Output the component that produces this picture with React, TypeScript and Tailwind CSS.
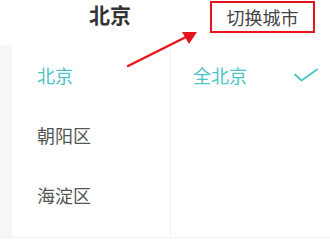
import React from "react";

const districts = ["北京", "朝阳区", "海淀区"];

export default function App() {
  return (
    <div
      className="relative w-[330px] h-[241px] overflow-hidden bg-white"
      style={{ fontFamily: '"Noto Sans CJK SC", "Noto Sans", sans-serif' }}
    >
      {/* Header */}
      <div className="flex h-[45px] items-start">
        <div className="ml-[89px] mt-[1px] text-[21px] font-bold leading-[26px] text-[#333]">北京</div>
        <div className="ml-auto mr-[15px] mt-[1px] flex h-[32px] w-[105px] items-center justify-center border-2 border-[#e8131b] text-[18px] text-[#444]">
          切换城市
        </div>
      </div>

      {/* Body */}
      <div className="flex h-[193px] border-b border-[#f2f2f2]">
        <div className="w-[12px] bg-[#f6f6f6]" />
        <div className="w-[159px] border-r border-[#f3f3f3]">
          {districts.map((d, i) => (
            <div
              key={d}
              className={`flex h-[60px] items-center pl-[25px] text-[18px] ${
                i === 0 ? "text-[#4cc3c4]" : "text-[#555]"
              }`}
            >
              {d}
            </div>
          ))}
        </div>
        <div className="flex-1">
          <div className="flex h-[60px] items-center pl-[22px] pr-[12px] text-[18px] text-[#4cc3c4]">
            <span>全北京</span>
            <svg className="ml-auto" width="24" height="14" viewBox="0 0 24 14" fill="none">
              <path d="M1 6.5 L7.5 12.5 L23 1.5" stroke="#4cc3c4" strokeWidth="1.8" strokeLinecap="round" strokeLinejoin="round" />
            </svg>
          </div>
        </div>
      </div>

      {/* Annotation arrow */}
      <svg className="pointer-events-none absolute left-0 top-0" width="330" height="241">
        <line x1="128" y1="66" x2="186" y2="37" stroke="#e8131b" strokeWidth="2.5" strokeLinecap="round" />
        <polygon points="197,32 182,32 189,44" fill="#e8131b" />
      </svg>
    </div>
  );
}
